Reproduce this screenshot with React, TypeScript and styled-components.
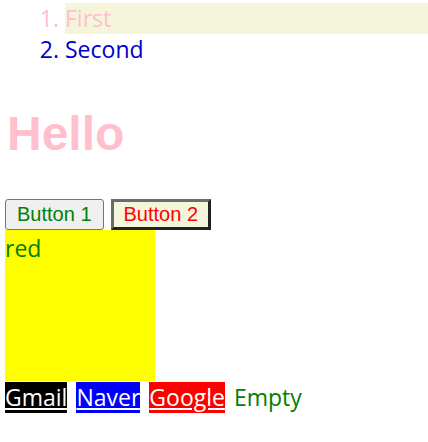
import styled, { createGlobalStyle } from "styled-components";

const GlobalStyle = createGlobalStyle`
  body {
    margin: 0;
    font-family: "Open Sans", "Noto Sans", sans-serif;
  }
`;

const App: React.FC = () => {
  return (
    <>
      <GlobalStyle />
      <Page>
        <List>
          <Item $first>First</Item>
          <Item>Second</Item>
        </List>
        <Title>Hello</Title>
        <ButtonRow>
          <PlainButton>Button 1</PlainButton>
          <FancyButton>Button 2</FancyButton>
        </ButtonRow>
        <YellowBox>red</YellowBox>
        <LinkRow>
          <SiteLink href="#" $bg="#000">Gmail</SiteLink>
          <SiteLink href="#" $bg="#0000ff">Naver</SiteLink>
          <SiteLink href="#" $bg="#ff0000">Google</SiteLink>
          <EmptyText>Empty</EmptyText>
        </LinkRow>
      </Page>
    </>
  );
};

const Page = styled.div`
  padding: 3px 0 0 5px;
`;

const List = styled.ol`
  margin: 0;
  padding-left: 60px;
  font-size: 23px;
  line-height: 31px;
`;

const Item = styled.li<{ $first?: boolean }>`
  color: ${(p) => (p.$first ? "pink" : "#0000cd")};
  background: ${(p) => (p.$first ? "#f5f5dc" : "transparent")};
`;

const Title = styled.h1`
  margin: 36px 0 0 2px;
  height: 98px;
  font-family: "Liberation Sans", Arial, sans-serif;
  font-size: 48px;
  line-height: 66px;
  font-weight: 700;
  color: pink;
`;

const ButtonRow = styled.div`
  display: flex;
  gap: 7px;
`;

const PlainButton = styled.button`
  height: 31px;
  padding: 0 11px;
  font-family: "Liberation Sans", Arial, sans-serif;
  font-size: 20px;
  color: green;
  background: #efefef;
  border: 1px solid #767676;
  border-radius: 3px;
`;

const FancyButton = styled.button`
  height: 31px;
  padding: 0 10px;
  font-family: "Liberation Sans", Arial, sans-serif;
  font-size: 20px;
  color: red;
  background: #f5f5dc;
  border: 3px solid;
  border-color: #6b6b6b #222 #222 #6b6b6b;
`;

const YellowBox = styled.div`
  width: 150px;
  height: 151px;
  background: yellow;
  color: green;
  font-size: 23px;
  line-height: 36px;
`;

const LinkRow = styled.div`
  display: flex;
  gap: 9px;
  margin-top: 1px;
  font-size: 23px;
  line-height: 31px;
`;

const SiteLink = styled.a<{ $bg: string }>`
  color: #fff;
  background: ${(p) => p.$bg};
  text-decoration: underline;
`;

const EmptyText = styled.span`
  color: green;
`;

export default App;
